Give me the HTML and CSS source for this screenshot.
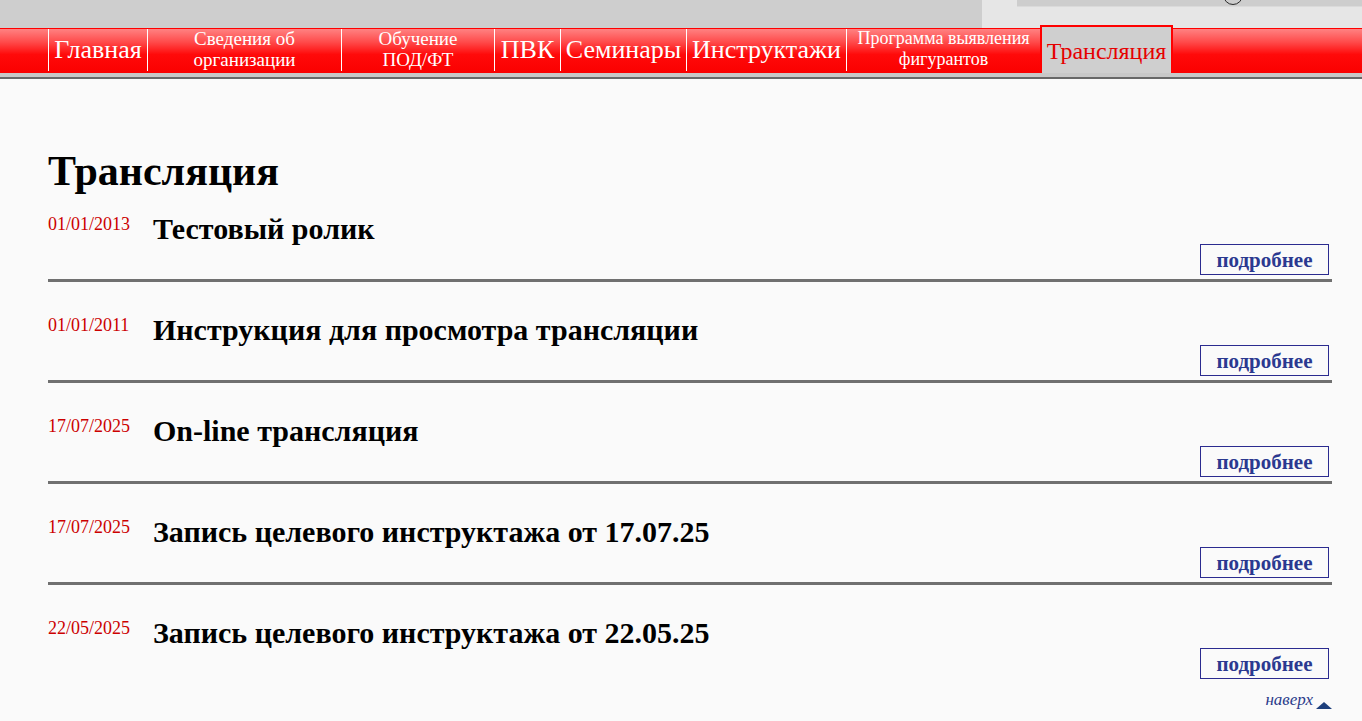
FILE: index.html
```html
<!DOCTYPE html>
<html lang="ru">
<head>
<meta charset="utf-8">
<title>Трансляция</title>
<link rel="stylesheet" href="styles.css">
</head>
<body>
<div class="chrome">
  <div class="chrome-left"></div>
  <div class="chrome-right">
    <div class="chrome-field">
      <svg class="chrome-circle" width="22" height="6" viewBox="0 0 22 6"><circle cx="11" cy="-5" r="9.5" fill="none" stroke="#2a2a2a" stroke-width="1"/></svg>
    </div>
  </div>
</div>
<nav class="menu">
  <a class="menu-item big w-main" href="#">Главная</a>
  <a class="menu-item small w-org" href="#">Сведения об<br>организации</a>
  <a class="menu-item small w-edu" href="#">Обучение<br>ПОД/ФТ</a>
  <a class="menu-item big w-pvk" href="#">ПВК</a>
  <a class="menu-item big w-sem" href="#">Семинары</a>
  <a class="menu-item big w-ins" href="#">Инструктажи</a>
  <a class="menu-item small narrow w-prog" href="#">Программа выявления<br>фигурантов</a>
  <a class="menu-item w-tr active" href="#">Трансляция</a>
</nav>
<div class="menu-rule"></div>
<main class="content">
  <h1 class="page-title">Трансляция</h1>
  <article class="item">
    <div class="item-head"><span class="item-date">01/01/2013</span><h2 class="item-title">Тестовый ролик</h2></div>
    <div class="item-more"><a class="more-btn" href="#">подробнее</a></div>
  </article>
  <article class="item">
    <div class="item-head"><span class="item-date">01/01/2011</span><h2 class="item-title">Инструкция для просмотра трансляции</h2></div>
    <div class="item-more"><a class="more-btn" href="#">подробнее</a></div>
  </article>
  <article class="item">
    <div class="item-head"><span class="item-date">17/07/2025</span><h2 class="item-title">On-line трансляция</h2></div>
    <div class="item-more"><a class="more-btn" href="#">подробнее</a></div>
  </article>
  <article class="item">
    <div class="item-head"><span class="item-date">17/07/2025</span><h2 class="item-title">Запись целевого инструктажа от 17.07.25</h2></div>
    <div class="item-more"><a class="more-btn" href="#">подробнее</a></div>
  </article>
  <article class="item">
    <div class="item-head"><span class="item-date">22/05/2025</span><h2 class="item-title">Запись целевого инструктажа от 22.05.25</h2></div>
    <div class="item-more"><a class="more-btn" href="#">подробнее</a></div>
  </article>
  <p class="to-top"><a class="to-top-link" href="#">наверх</a><svg class="to-top-arrow" width="16" height="7" viewBox="0 0 16 7"><polygon points="8,0 16,7 0,7" fill="#1d3f7c"/></svg></p>
</main>
</body>
</html>
```
FILE: styles.css
```css
html, body {
  margin: 0;
  padding: 0;
}
body {
  background: #fafafa;
  font-family: "Liberation Serif", "Times New Roman", serif;
  color: #000;
}
.chrome {
  display: flex;
  height: 28px;
}
.chrome-left {
  width: 982px;
  background: #cecece;
}
.chrome-right {
  flex: 1;
  background: #e6e6e6;
  padding-left: 35px;
}
.chrome-field {
  height: 6px;
  background: #cdcdcd;
  border-bottom: 1px solid #dadada;
  display: flex;
  padding-left: 205px;
}
.chrome-circle {
  display: block;
}
.menu {
  display: flex;
  align-items: stretch;
  height: 44px;
  border-top: 1px solid #ff0000;
  padding-left: 48px;
  background: linear-gradient(to bottom, #ff8282 0%, #ff4a4a 30%, #ff0a0a 58%, #fa0000 100%);
}
.menu-item {
  box-sizing: border-box;
  flex: 0 0 auto;
  display: flex;
  align-items: center;
  justify-content: center;
  text-align: center;
  color: #fff;
  text-decoration: none;
  border-left: 1px solid #fff;
  margin-bottom: 2px;
}
.menu-item.big {
  font-size: 26px;
  line-height: 28px;
}
.menu-item.small {
  font-size: 19px;
  line-height: 21px;
  padding-bottom: 2px;
}
.menu-item.small.narrow {
  font-size: 18px;
}
.menu-item.active {
  border: 2px solid #ff0000;
  border-bottom: 0;
  margin-top: -4px;
  margin-bottom: 0;
  background: #cfcfcf;
  color: #e60000;
  font-size: 24px;
  line-height: 27px;
  padding-top: 3px;
}
.w-main { width: 99px; }
.w-org { width: 194px; }
.w-edu { width: 153px; }
.w-pvk { width: 66px; }
.w-sem { width: 126px; }
.w-ins { width: 160px; }
.w-prog { width: 194px; }
.w-tr { width: 133px; }
.menu-rule {
  height: 4px;
  background: #c8c8c8;
  border-bottom: 2px solid #686868;
}
.content {
  padding: 0 30px 0 48px;
}
.page-title {
  margin: 72px 0 22px;
  font-size: 42px;
  line-height: 40px;
  font-weight: bold;
}
.item {
  border-bottom: 3px solid #707070;
}
.item + .item {
  padding-top: 32px;
}
.item:last-of-type {
  border-bottom: 0;
}
.item-head {
  display: flex;
  align-items: flex-start;
  height: 31px;
}
.item-date {
  flex: 0 0 105px;
  font-size: 18px;
  color: #cc0000;
  margin-top: 1px;
}
.item-title {
  margin: 0;
  font-size: 30px;
  line-height: 31px;
  font-weight: bold;
}
.item-more {
  display: flex;
  justify-content: flex-end;
  padding-right: 3px;
  margin-bottom: 4px;
}
.more-btn {
  box-sizing: border-box;
  width: 129px;
  height: 31px;
  border: 1px solid #2b2b8f;
  display: flex;
  align-items: center;
  justify-content: center;
  padding-top: 2px;
  font-size: 21px;
  font-weight: bold;
  color: #2b3990;
  text-decoration: none;
}
.to-top {
  margin: 11px 0 0;
  display: flex;
  justify-content: flex-end;
  align-items: flex-end;
  gap: 3px;
}
.to-top-link {
  font-size: 17px;
  font-style: italic;
  color: #2b3a8a;
  text-decoration: none;
}
.to-top-arrow {
  display: block;
  margin-bottom: 1px;
}
```
